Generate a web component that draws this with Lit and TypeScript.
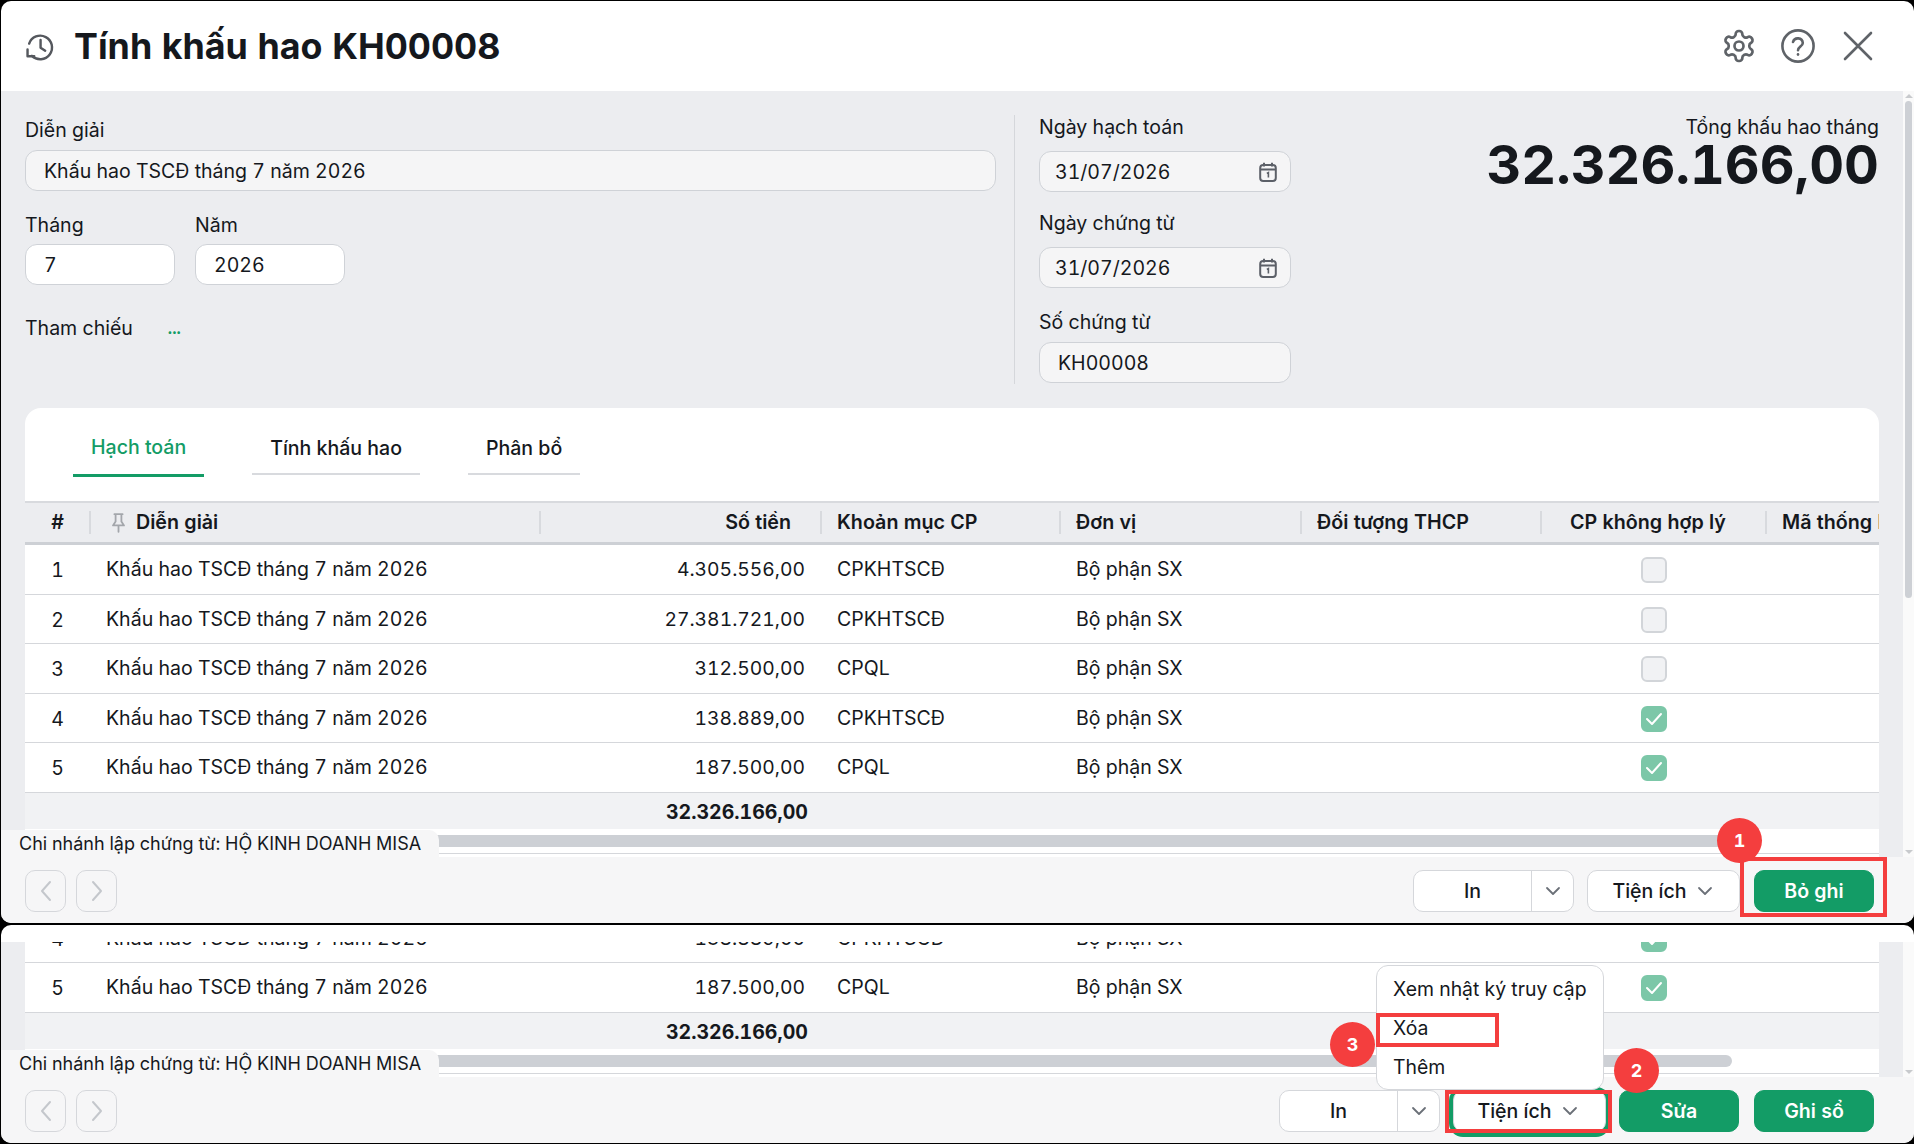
import { LitElement, html, css } from "lit";
import { customElement } from "lit/decorators.js";

const DESC = "Khấu hao TSCĐ tháng 7 năm 2026";
type Row = { n: number; amt: string; cat: string; on: boolean };
const ROWS: Row[] = [
  { n: 1, amt: "4.305.556,00", cat: "CPKHTSCĐ", on: false },
  { n: 2, amt: "27.381.721,00", cat: "CPKHTSCĐ", on: false },
  { n: 3, amt: "312.500,00", cat: "CPQL", on: false },
  { n: 4, amt: "138.889,00", cat: "CPKHTSCĐ", on: true },
  { n: 5, amt: "187.500,00", cat: "CPQL", on: true },
];

const calendar = html`<svg class="cal" viewBox="0 0 18 20" fill="none" stroke="#5c6068" stroke-width="2"><rect x="1.2" y="3" width="15.6" height="16" rx="3"/><path d="M1.2 7.6h15.6M5 .8v3.6M13 .8v3.6"/><path d="M7.8 11.4l1.6-.8v5" stroke-width="1.6"/></svg>`;
const chevDown = html`<svg class="chev" viewBox="0 0 16 10" fill="none" stroke="#6b7078" stroke-width="1.8" stroke-linecap="round" stroke-linejoin="round"><path d="M2 2l6 6 6-6"/></svg>`;

@customElement("app-root")
export class AppRoot extends LitElement {
  static styles = css`
    :host { display: block; width: 1914px; height: 1144px; background: #000; overflow: hidden; font-family: Inter, "Liberation Sans", sans-serif; font-size: 19.55px; color: #15181d; font-variant-numeric: tabular-nums; }
    * { box-sizing: border-box; }
    .panel { position: relative; margin-left: 1px; width: 1913px; background: #fff; border-radius: 10px; overflow: hidden; display: flex; flex-direction: column; }
    .p1 { margin-top: 1px; height: 922px; }
    .p2 { margin-top: 2px; height: 218px; }
    .head { height: 90px; flex: none; display: flex; align-items: center; padding: 0 40px 0 24px; }
    .head h1 { margin: 0 0 0 19px; font-size: 35.8px; font-weight: 700; flex: 1; line-height: 44px; }
    .head svg { flex: none; display: block; }
    .i-hist { width: 30px; height: 30px; margin-top: 1px; }
    .i-gear { width: 36px; height: 36px; margin-right: 23px; }
    .i-help { width: 36px; height: 36px; margin-right: 26px; }
    .i-close { width: 32px; height: 32px; }
    .spacer { height: 17px; flex: none; }
    .mid { flex: 1; min-height: 0; display: flex; }
    .scroll { flex: 1; min-width: 0; background: #ecedf0; padding: 0 24px; display: flex; flex-direction: column; }
    .bar { width: 11px; flex: none; background: #fafafa; display: flex; flex-direction: column; align-items: center; padding: 3px 0; }
    .thumb { width: 7px; height: 497px; margin-top: 3px; border-radius: 4px; background: #cdd0d5; }
    .up, .dn { width: 0; height: 0; border-left: 4px solid transparent; border-right: 4px solid transparent; }
    .up { border-bottom: 4px solid #c8cacd; }
    .dn { border-top: 4px solid #c8cacd; margin-top: auto; }
    .form { height: 317px; flex: none; display: flex; }
    .left { width: 971px; flex: none; padding-top: 28px; }
    label, .lab { display: block; line-height: 22px; font-weight: 400; font-size: 19.55px; }
    .inp { height: 41px; border: 1px solid #cfd2d7; border-radius: 12px; background: #f5f5f6; padding: 1px 18px 0; display: flex; align-items: center; line-height: 22px; }
    .inp.white { background: #fff; }
    .l1 { margin-top: 9px; }
    .two { display: flex; gap: 20px; margin-top: 23px; }
    .two > div { width: 150px; }
    .two .inp { margin-top: 8px; }
    .ref { margin-top: 32px; display: flex; line-height: 22px; }
    .ref b { color: #139c66; margin-left: 35px; font-weight: 700; font-size: 16px; }
    .divider { width: 1px; height: 269px; margin: 24px 24px 0 18px; background: #d5d7db; flex: none; }
    .right { width: 252px; flex: none; padding-top: 25px; }
    .right .inp { margin-top: 13px; padding: 1px 13px 0 15px; justify-content: space-between; }
    .right .g2 { margin-top: 20px; }
    .right .g3 { margin-top: 23px; }
    .right .i3 { margin-top: 9px; padding-left: 18px; }
    .cal { width: 18px; height: 20px; display: block; }
    .tot { flex: 1; text-align: right; padding-top: 25px; white-space: nowrap; }
    .tot .lab { line-height: 22px; }
    .tot .big { font-size: 54px; font-weight: 700; line-height: 56px; margin-top: -1px; }
    .card { flex: 1; min-height: 0; background: #fff; border-radius: 16px 16px 0 0; display: flex; flex-direction: column; overflow: hidden; }
    .card.tail { border-radius: 0; justify-content: flex-end; }
    .tabs { flex: none; display: flex; gap: 48px; padding: 22px 0 0 48px; height: 93px; }
    .tab { height: 45px; padding: 0 18px; line-height: 37px; border-bottom: 2px solid #d8dade; font-weight: 500; }
    .tab.on { height: 47px; color: #139c66; border-bottom: 3px solid #139c66; line-height: 35px; }
    .tbl-head, .row { display: grid; grid-template-columns: 65px 450px 281px 239px 241px 240px 225px 113px; flex: none; }
    .tbl-head { height: 44px; border-top: 2px solid #d8dade; border-bottom: 3px solid #cdd0d5; background: #ecedf0; font-weight: 600; font-size: 19.7px; align-items: center; }
    .hc { white-space: nowrap; overflow: hidden; height: 23px; line-height: 23px; padding-left: 15px; margin-left: -1px; border-left: 2px solid #d8dade; }
    .hc.first { border-left: 0; margin-left: 0; text-align: center; padding: 0; }
    .hc.desc { display: flex; align-items: center; padding-left: 20px; gap: 10px; }
    .hc.amt { text-align: right; padding-right: 30px; }
    .hc.cp { text-align: center; padding: 0 12px 0 0; }
    .pin { width: 15px; height: 20px; flex: none; }
    .row { height: 49.5px; border-bottom: 1px solid #d5d7db; align-items: center; line-height: 22px; }
    .c { padding-left: 16px; white-space: nowrap; }
    .num { padding: 2px 0 0; text-align: center; }
    .amt { text-align: right; padding: 0 16px 0 0; }
    .row .amt { font-size: 19.3px; }
    .box { width: 26px; height: 26px; border-radius: 6px; border: 2px solid #d2d5d9; background: #f1f2f4; margin: 2px 0 0 100px; }
    .box.on { background: #7cc7a8; border-color: #7cc7a8; display: flex; align-items: center; justify-content: center; }
    .box svg { width: 18px; height: 14px; }
    .sum { height: 36.5px; flex: none; background: #f1f2f4; display: grid; grid-template-columns: 65px 450px 284px; align-items: center; font-weight: 700; padding-top: 3px; }
    .sum div:last-child { grid-column: 3; text-align: right; padding-right: 16px; }
    .strip { height: 28px; flex: none; padding-top: 6px; }
    .hbar { height: 12px; margin-right: 147px; background: #cdd0d5; border-radius: 0 6px 6px 0; }
    .hline { height: 1px; margin-top: 6px; background: #d5d7db; }
    .foot { position: relative; height: 66px; flex: none; background: #f6f6f7; display: flex; padding: 13px 40px 0 24px; gap: 13px; }
    .btn { height: 42px; border-radius: 10px; border: 1px solid #d5d7db; background: #fff; display: flex; align-items: center; justify-content: center; font-weight: 500; }
    .nav { width: 41px; background: transparent; }
    .nav + .nav { margin-left: -3px; }
    .nav svg { width: 12px; height: 24px; }
    .grow { margin-left: auto; }
    .split { width: 161px; display: grid; grid-template-columns: 117px 1fr; padding: 0; }
    .split span { text-align: center; line-height: 40px; height: 40px; }
    .split div { height: 40px; border-left: 1px solid #d5d7db; display: flex; align-items: center; justify-content: center; }
    .chev { width: 16px; height: 10px; display: block; }
    .util { width: 153px; gap: 10px; white-space: nowrap; padding-right: 2px; }
    .util.focus { box-shadow: 0 1px 0 4px #139c66; padding-right: 4px; }
    .green { width: 120px; background: #139c66; border-color: #139c66; color: #fff; font-weight: 600; }
    .gap1 { margin-left: 1px; }
    .gap2 { margin-left: 2px; }
    .chip { position: absolute; left: 0; bottom: 66px; width: 438px; height: 27px; background: #f6f6f7; border-radius: 0 10px 0 0; padding-left: 18px; line-height: 27px; font-size: 18px; white-space: nowrap; }
    .badge { position: absolute; width: 45px; height: 45px; border-radius: 50%; background: #f43e3e; color: #fff; display: flex; align-items: center; justify-content: center; font-weight: 700; font-size: 18px; z-index: 4; }
    .rbox { position: absolute; border: 4px solid #f43e3e; z-index: 3; }
    .menu { position: absolute; left: 1375px; top: 40px; width: 228px; height: 125px; background: #fff; border: 1px solid #d5d7db; border-radius: 12px; z-index: 2; padding: 4px 0 0 16px; font-size: 19.4px; }
    .menu div { height: 39px; line-height: 39px; white-space: nowrap; }
    .b1 { left: 1716px; top: 817px; }
    .b2 { left: 1613px; top: 123px; }
    .b3 { left: 1329px; top: 97px; }
    .r1 { left: 1739px; top: 856px; width: 147px; height: 60px; }
    .r2 { left: 1444px; top: 165px; width: 167px; height: 43px; }
    .r3 { left: 1375px; top: 88px; width: 123px; height: 34px; }
  `;

  private tableRows(rows: Row[]) {
    return html`${rows.map(
      (r) => html`<div class="row">
        <div class="num">${r.n}</div>
        <div class="c">${DESC}</div>
        <div class="amt">${r.amt}</div>
        <div class="c">${r.cat}</div>
        <div class="c">Bộ phận SX</div>
        <div></div>
        <div>${r.on
          ? html`<div class="box on"><svg viewBox="0 0 18 14" fill="none" stroke="#fff" stroke-width="2" stroke-linecap="round" stroke-linejoin="round"><path d="M2 7l5 5 9-10"/></svg></div>`
          : html`<div class="box"></div>`}</div>
        <div></div>
      </div>`
    )}
    <div class="sum"><div></div><div></div><div>32.326.166,00</div></div>
    <div class="strip"><div class="hbar"></div><div class="hline"></div></div>`;
  }

  private navBtns() {
    return html`<div class="btn nav"><svg viewBox="0 0 12 24" fill="none" stroke="#c4c7cc" stroke-width="2" stroke-linecap="round" stroke-linejoin="round"><path d="M10 3L2 12l8 9"/></svg></div>
      <div class="btn nav"><svg viewBox="0 0 12 24" fill="none" stroke="#c4c7cc" stroke-width="2" stroke-linecap="round" stroke-linejoin="round"><path d="M2 3l8 9-8 9"/></svg></div>`;
  }

  private split() {
    return html`<div class="btn split grow"><span>In</span><div>${chevDown}</div></div>`;
  }

  render() {
    return html`
      <section class="panel p1">
        <header class="head">
          <svg class="i-hist" viewBox="0 0 26 26" fill="none" stroke="#55585e" stroke-width="2.1" stroke-linecap="round" stroke-linejoin="round"><path d="M3.6 10A10.2 10.2 0 1 1 6 20.6"/><path d="M2.2 15.2v5.8H8"/><path d="M13.5 7v6.6l4 2.6"/></svg>
          <h1>Tính khấu hao KH00008</h1>
          <svg class="i-gear" viewBox="0 0 24 24" fill="none" stroke="#5f6368" stroke-width="1.8" stroke-linecap="round" stroke-linejoin="round"><path d="M12.22 2h-.44a2 2 0 0 0-2 2v.18a2 2 0 0 1-1 1.73l-.43.25a2 2 0 0 1-2 0l-.15-.08a2 2 0 0 0-2.73.73l-.22.38a2 2 0 0 0 .73 2.73l.15.1a2 2 0 0 1 1 1.72v.51a2 2 0 0 1-1 1.74l-.15.09a2 2 0 0 0-.73 2.73l.22.38a2 2 0 0 0 2.73.73l.15-.08a2 2 0 0 1 2 0l.43.25a2 2 0 0 1 1 1.73V20a2 2 0 0 0 2 2h.44a2 2 0 0 0 2-2v-.18a2 2 0 0 1 1-1.73l.43-.25a2 2 0 0 1 2 0l.15.08a2 2 0 0 0 2.73-.73l.22-.39a2 2 0 0 0-.73-2.73l-.15-.08a2 2 0 0 1-1-1.74v-.5a2 2 0 0 1 1-1.74l.15-.09a2 2 0 0 0 .73-2.73l-.22-.38a2 2 0 0 0-2.73-.73l-.15.08a2 2 0 0 1-2 0l-.43-.25a2 2 0 0 1-1-1.73V4a2 2 0 0 0-2-2z"/><circle cx="12" cy="12" r="3"/></svg>
          <svg class="i-help" viewBox="0 0 36 36" fill="none" stroke="#5f6368" stroke-width="2.6" stroke-linecap="round" stroke-linejoin="round"><circle cx="18" cy="18" r="15.6"/><path d="M13 14a5 5 0 0 1 9.8 1c0 3.2-4.8 4-4.8 7.2"/><path d="M18 26.4v.2"/></svg>
          <svg class="i-close" viewBox="0 0 32 32" fill="none" stroke="#5f6368" stroke-width="2.6" stroke-linecap="round"><path d="M3 3l26 26M29 3L3 29"/></svg>
        </header>
        <div class="mid">
          <div class="scroll">
            <div class="form">
              <div class="left">
                <label>Diễn giải</label>
                <div class="inp l1">${DESC}</div>
                <div class="two">
                  <div><label>Tháng</label><div class="inp white">7</div></div>
                  <div><label>Năm</label><div class="inp white">2026</div></div>
                </div>
                <div class="ref"><span>Tham chiếu</span><b>...</b></div>
              </div>
              <div class="divider"></div>
              <div class="right">
                <label>Ngày hạch toán</label>
                <div class="inp"><span>31/07/2026</span>${calendar}</div>
                <label class="g2">Ngày chứng từ</label>
                <div class="inp"><span>31/07/2026</span>${calendar}</div>
                <label class="g3">Số chứng từ</label>
                <div class="inp i3">KH00008</div>
              </div>
              <div class="tot">
                <div class="lab">Tổng khấu hao tháng</div>
                <div class="big">32.326.166,00</div>
              </div>
            </div>
            <div class="card">
              <div class="tabs">
                <div class="tab on">Hạch toán</div>
                <div class="tab">Tính khấu hao</div>
                <div class="tab">Phân bổ</div>
              </div>
              <div class="tbl-head">
                <div class="hc first">#</div>
                <div class="hc desc"><svg class="pin" viewBox="0 0 15 20" fill="none" stroke="#a3a6ab" stroke-width="1.8" stroke-linejoin="round" stroke-linecap="round"><path d="M3.4 1.2h8.2M4.6 1.2v7.4L2 12.4h11l-2.6-3.8V1.2M7.5 12.4v6.4"/></svg>Diễn giải</div>
                <div class="hc amt">Số tiền</div>
                <div class="hc">Khoản mục CP</div>
                <div class="hc">Đơn vị</div>
                <div class="hc">Đối tượng THCP</div>
                <div class="hc cp">CP không hợp lý</div>
                <div class="hc">Mã thống kê</div>
              </div>
              ${this.tableRows(ROWS)}
            </div>
          </div>
          <div class="bar"><div class="up"></div><div class="thumb"></div><div class="dn"></div></div>
        </div>
        <footer class="foot">
          ${this.navBtns()}
          ${this.split()}
          <div class="btn util">Tiện ích ${chevDown}</div>
          <div class="btn green gap1">Bỏ ghi</div>
        </footer>
        <div class="chip">Chi nhánh lập chứng từ: HỘ KINH DOANH MISA</div>
        <div class="badge b1">1</div>
        <div class="rbox r1"></div>
      </section>

      <section class="panel p2">
        <div class="spacer"></div>
        <div class="mid">
          <div class="scroll">
            <div class="card tail">${this.tableRows(ROWS.slice(3))}</div>
          </div>
          <div class="bar"><div class="dn"></div></div>
        </div>
        <footer class="foot">
          ${this.navBtns()}
          ${this.split()}
          <div class="btn util focus">Tiện ích ${chevDown}</div>
          <div class="btn green">Sửa</div>
          <div class="btn green gap2">Ghi sổ</div>
        </footer>
        <div class="chip">Chi nhánh lập chứng từ: HỘ KINH DOANH MISA</div>
        <div class="menu"><div>Xem nhật ký truy cập</div><div>Xóa</div><div>Thêm</div></div>
        <div class="badge b2">2</div>
        <div class="badge b3">3</div>
        <div class="rbox r2"></div>
        <div class="rbox r3"></div>
      </section>
    `;
  }
}
